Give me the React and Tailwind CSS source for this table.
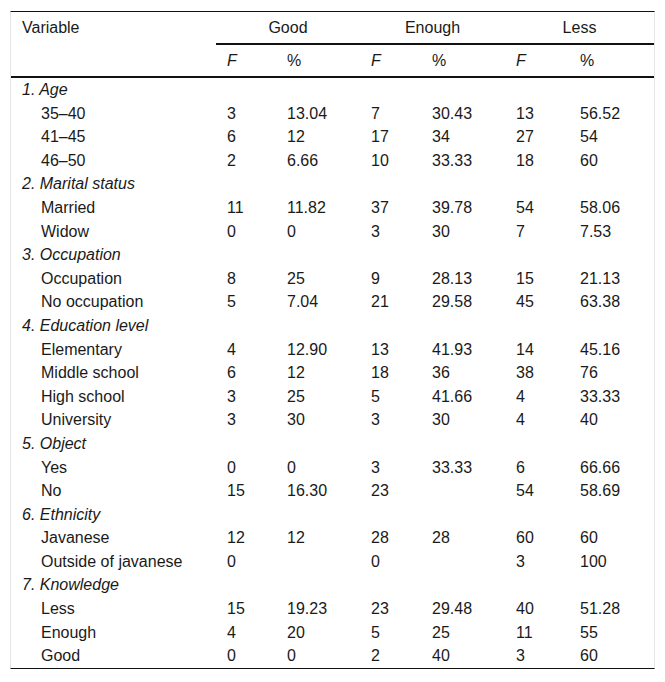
const groups = [
  {
    title: '1. Age',
    rows: [
      ['35–40', '3', '13.04', '7', '30.43', '13', '56.52'],
      ['41–45', '6', '12', '17', '34', '27', '54'],
      ['46–50', '2', '6.66', '10', '33.33', '18', '60'],
    ],
  },
  {
    title: '2. Marital status',
    rows: [
      ['Married', '11', '11.82', '37', '39.78', '54', '58.06'],
      ['Widow', '0', '0', '3', '30', '7', '7.53'],
    ],
  },
  {
    title: '3. Occupation',
    rows: [
      ['Occupation', '8', '25', '9', '28.13', '15', '21.13'],
      ['No occupation', '5', '7.04', '21', '29.58', '45', '63.38'],
    ],
  },
  {
    title: '4. Education level',
    rows: [
      ['Elementary', '4', '12.90', '13', '41.93', '14', '45.16'],
      ['Middle school', '6', '12', '18', '36', '38', '76'],
      ['High school', '3', '25', '5', '41.66', '4', '33.33'],
      ['University', '3', '30', '3', '30', '4', '40'],
    ],
  },
  {
    title: '5. Object',
    rows: [
      ['Yes', '0', '0', '3', '33.33', '6', '66.66'],
      ['No', '15', '16.30', '23', '', '54', '58.69'],
    ],
  },
  {
    title: '6. Ethnicity',
    rows: [
      ['Javanese', '12', '12', '28', '28', '60', '60'],
      ['Outside of javanese', '0', '', '0', '', '3', '100'],
    ],
  },
  {
    title: '7. Knowledge',
    rows: [
      ['Less', '15', '19.23', '23', '29.48', '40', '51.28'],
      ['Enough', '4', '20', '5', '25', '11', '55'],
      ['Good', '0', '0', '2', '40', '3', '60'],
    ],
  },
];

const cols = 'grid grid-cols-[205px_60px_84px_61px_84px_64px_85px]';

const App = () => {
  return (
    <div className="min-h-screen bg-white pt-[11px] pl-[10px] text-[#1a1a1a] text-[16px] font-['Liberation_Sans',Arial,sans-serif]">
      <div className="w-[645px] border-x border-[#e6e6e6] border-t border-t-[#111] border-b border-b-[#111]">
        {/* header */}
        <div className={cols}>
          <div className="row-span-2 border-b-2 border-[#111] px-[11px] leading-[31px]">
            Variable
          </div>
          {['Good', 'Enough', 'Less'].map((g) => (
            <div key={g} className="col-span-2 h-[31px] border-b-2 border-[#111] flex items-center justify-center box-content">
              {g}
            </div>
          ))}
          {['Good', 'Enough', 'Less'].map((g) => [
            <div key={g + 'f'} className="h-[31px] border-b-2 border-[#111] px-[11px] flex items-center italic box-content">F</div>,
            <div key={g + 'p'} className="h-[31px] border-b-2 border-[#111] px-[11px] flex items-center box-content">%</div>,
          ])}
        </div>

        {/* body */}
        {groups.map((group) => (
          <div key={group.title}>
            <div className={cols + ' h-[23.6px] items-center'}>
              <div className="col-span-7 px-[11px] italic">{group.title}</div>
            </div>
            {group.rows.map((row) => (
              <div key={row[0]} className={cols + ' h-[23.6px] items-center'}>
                {row.map((cell, i) => (
                  <div key={i} className={i === 0 ? 'pl-[30px] whitespace-nowrap' : 'px-[11px]'}>
                    {cell}
                  </div>
                ))}
              </div>
            ))}
          </div>
        ))}
      </div>
    </div>
  );
};

export default App;
